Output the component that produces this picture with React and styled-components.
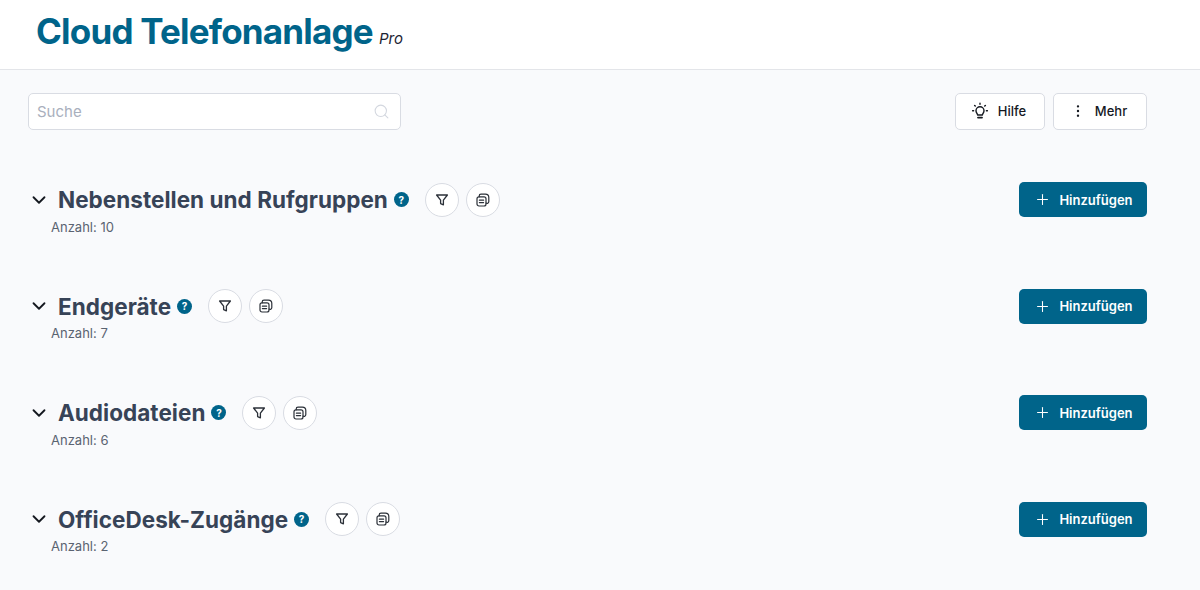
import styled, { createGlobalStyle } from "styled-components";
import { ChevronDown, EllipsisVertical, Plus, Search } from "lucide-react";

const GlobalStyle = createGlobalStyle`
  html, body {
    margin: 0;
    height: 100%;
    overflow: hidden;
    background: #f9fafc;
    font-family: Inter, "Liberation Sans", sans-serif;
  }
`;

const Header = styled.header`
  height: 69px;
  background: #fff;
  border-bottom: 1px solid #e3e5e9;
  display: flex;
  align-items: center;
  padding-left: 36px;
  box-sizing: content-box;
`;

const Brand = styled.h1`
  margin: 0;
  font-size: 35px;
  font-weight: 700;
  letter-spacing: -0.8px;
  color: #00648a;
  line-height: 1;
  position: relative;
  top: -3px;
`;

const Edition = styled.em`
  font-size: 15px;
  font-weight: 400;
  letter-spacing: 0;
  color: #1d2433;
  margin-left: 6px;
`;

const Main = styled.main`
  padding: 23px 53px 0 28px;
`;

const Toolbar = styled.div`
  display: flex;
  justify-content: space-between;
  align-items: center;
  margin-bottom: 52px;
`;

const SearchBox = styled.div`
  width: 373px;
  height: 37px;
  box-sizing: border-box;
  background: #fff;
  border: 1px solid #d9dce3;
  border-radius: 5px;
  display: flex;
  align-items: center;
  justify-content: space-between;
  padding: 0 10px 0 8px;
  color: #d3d7df;
`;

const SearchInput = styled.input`
  border: 0;
  outline: 0;
  background: transparent;
  font: 400 15px Inter, sans-serif;
  flex: 1;
  padding: 0;
  &::placeholder {
    color: #a9afbd;
  }
`;

const Actions = styled.div`
  display: flex;
  gap: 8px;
`;

const ToolButton = styled.button`
  height: 37px;
  width: ${(p) => p.$width}px;
  box-sizing: border-box;
  background: #fff;
  border: 1px solid #d9dce3;
  border-radius: 5px;
  display: flex;
  align-items: center;
  justify-content: center;
  gap: 9px;
  padding: 0 3px 1px 0;
  font: 500 13px Inter, sans-serif;
  color: #14181f;
`;

const Section = styled.section`
  height: 106.5px;
  display: flex;
  justify-content: space-between;
  align-items: flex-start;
`;

const Titles = styled.div`
  display: flex;
  flex-direction: column;
`;

const TitleRow = styled.div`
  height: 35px;
  display: flex;
  align-items: center;
`;

const Toggle = styled.span`
  display: flex;
  width: 30px;
  color: #14181f;
`;

const Title = styled.h2`
  margin: 0;
  font-size: 22.5px;
  font-weight: 700;
  letter-spacing: 0.03px;
  color: #374357;
`;

const HelpDot = styled.span`
  width: 15px;
  height: 15px;
  margin-left: 6px;
  border-radius: 50%;
  background: #00648a;
  color: #fff;
  font-size: 10px;
  font-weight: 700;
  display: flex;
  align-items: center;
  justify-content: center;
`;

const RoundButton = styled.button`
  width: 34px;
  height: 34px;
  box-sizing: border-box;
  margin-left: ${(p) => p.$offset}px;
  border-radius: 50%;
  border: 1px solid #d9dce3;
  background: #fff;
  color: #2b3038;
  display: flex;
  align-items: center;
  justify-content: center;
  padding: 0;
`;

const Count = styled.div`
  margin: 1.5px 0 0 23px;
  font-size: 13px;
  line-height: 16px;
  color: #5a6371;
`;

const AddButton = styled.button`
  width: 128px;
  height: 35px;
  border: 0;
  border-radius: 5px;
  background: #00648a;
  color: #fff;
  display: flex;
  align-items: center;
  justify-content: center;
  gap: 8px;
  padding: 0 0 0 1px;
  font: 600 13px Inter, sans-serif;
`;

const BulbIcon = () => (
  <svg width="18" height="18" viewBox="0 0 18 18" fill="none" stroke="currentColor" strokeWidth="1.4" strokeLinecap="round" strokeLinejoin="round">
    <path d="M6.6 13c0-1.4-1.6-2.1-1.6-4.2a4 4 0 0 1 8 0c0 2.1-1.6 2.8-1.6 4.2z" />
    <path d="M7 15.6h4" strokeWidth="1.8" />
    <path d="M9 1.2v1M3.6 3.4l.7.7M14.4 3.4l-.7.7M1.6 8.8h1M15.4 8.8h1" />
  </svg>
);

const FilterIcon = () => (
  <svg width="14" height="14" viewBox="0 0 14 14" fill="none" stroke="currentColor" strokeWidth="1.3" strokeLinejoin="round">
    <path d="M1.6 2h10.8L8.4 7.2v4.6l-2.8-1.2V7.2z" />
  </svg>
);

const StackIcon = () => (
  <svg width="14" height="14" viewBox="0 0 14 14" fill="none" stroke="currentColor" strokeWidth="1.2" strokeLinejoin="round" strokeLinecap="round">
    <rect x="1" y="3.8" width="9" height="9.2" rx="2" />
    <path d="M3.2 3.8V3a1.8 1.8 0 0 1 1.8-1.8h4.4A3.4 3.4 0 0 1 12.8 4.6V8.6a1.8 1.8 0 0 1-2.8 1.5" />
    <path d="M3.4 7.2h4.2M3.4 9.6h4.2" />
  </svg>
);

const sections = [
  { title: "Nebenstellen und Rufgruppen", count: 10 },
  { title: "Endgeräte", count: 7 },
  { title: "Audiodateien", count: 6 },
  { title: "OfficeDesk-Zugänge", count: 2 },
];

const App = () => {
  return (
    <>
      <GlobalStyle />
      <Header>
        <Brand>
          Cloud Telefonanlage<Edition>Pro</Edition>
        </Brand>
      </Header>
      <Main>
        <Toolbar>
          <SearchBox>
            <SearchInput placeholder="Suche" />
            <Search size={17} strokeWidth={1.5} />
          </SearchBox>
          <Actions>
            <ToolButton $width={90}>
              <BulbIcon />
              Hilfe
            </ToolButton>
            <ToolButton $width={94}>
              <EllipsisVertical size={16} strokeWidth={1.6} />
              Mehr
            </ToolButton>
          </Actions>
        </Toolbar>
        {sections.map((section) => (
          <Section key={section.title}>
            <Titles>
              <TitleRow>
                <Toggle>
                  <ChevronDown size={22} strokeWidth={2} />
                </Toggle>
                <Title>{section.title}</Title>
                <HelpDot>?</HelpDot>
                <RoundButton $offset={16}>
                  <FilterIcon />
                </RoundButton>
                <RoundButton $offset={7}>
                  <StackIcon />
                </RoundButton>
              </TitleRow>
              <Count>Anzahl: {section.count}</Count>
            </Titles>
            <AddButton>
              <Plus size={17} strokeWidth={1.5} />
              Hinzufügen
            </AddButton>
          </Section>
        ))}
      </Main>
    </>
  );
};

export default App;
